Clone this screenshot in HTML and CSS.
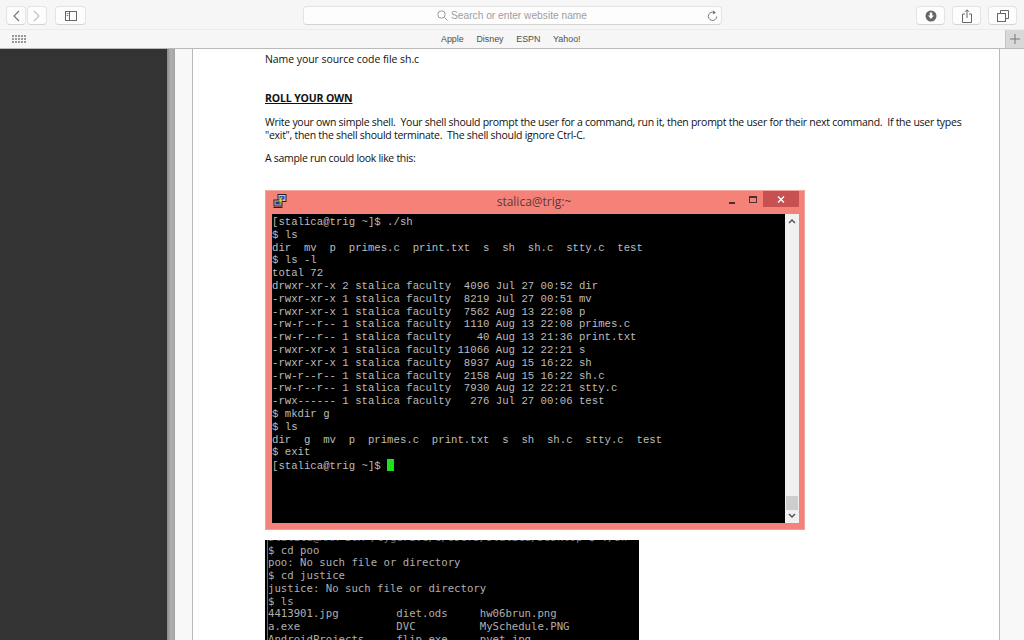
FILE: index.html
```html
<!DOCTYPE html>
<html lang="en">
<head>
<meta charset="utf-8">
<title>Safari</title>
<link rel="stylesheet" href="styles.css">
</head>
<body>
<header class="chrome">
  <div class="toolbar">
    <div class="nav">
      <button class="btn btn-nav"><svg width="8" height="12" viewBox="0 0 8 12"><path d="M7 1 2 6l5 5" fill="none" stroke="#6e6e6e" stroke-width="1.100"/></svg></button>
      <button class="btn btn-nav"><svg width="8" height="12" viewBox="0 0 8 12"><path d="M1 1l5 5-5 5" fill="none" stroke="#bdbdbd" stroke-width="1.100"/></svg></button>
      <button class="btn btn-side"><svg width="12" height="10" viewBox="0 0 12 10"><rect x=".5" y=".5" width="11" height="9" fill="none" stroke="#666"/><path d="M4.500 0v10" stroke="#666"/><path d="M1.500 2.500h2M1.500 4.500h2" stroke="#888"/></svg></button>
    </div>
    <div class="address">
      <span class="search"><svg class="lens" width="11" height="11" viewBox="0 0 11 11"><circle cx="4.500" cy="4.500" r="3.700" fill="none" stroke="#9a9a9a"/><path d="M7.300 7.300 10.500 10.500" stroke="#9a9a9a"/></svg>Search or enter website name</span>
      <svg class="reload" width="11" height="12" viewBox="0 0 11 12"><path d="M7.500 2.600A4.200 4.200 0 1 0 9.700 6.500" fill="none" stroke="#777"/><path d="M6 .5 9 2.600 6 4.500z" fill="#777"/></svg>
    </div>
    <div class="actions">
      <button class="btn btn-act"><svg width="12" height="12" viewBox="0 0 12 12"><circle cx="6" cy="6" r="5.500" fill="#666"/><path d="M4.800 2.500h2.400v3h1.700L6 9 3.100 5.500h1.700z" fill="#fff"/></svg></button>
      <button class="btn btn-act"><svg width="10" height="14" viewBox="0 0 10 14"><path d="M3 5H.5v8.500h9V5H7" fill="none" stroke="#666"/><path d="M5 9V1M3 2.800 5 .8l2 2" fill="none" stroke="#666"/></svg></button>
      <button class="btn btn-act"><svg width="12" height="12" viewBox="0 0 12 12"><rect x=".5" y="3.500" width="8" height="8" fill="none" stroke="#666"/><path d="M3.500 3.500v-3h8v8h-3" fill="none" stroke="#666"/></svg></button>
    </div>
  </div>
  <div class="favorites">
    <div class="grid-icon"><i></i><i></i><i></i><i></i><i></i><i></i><i></i><i></i><i></i><i></i><i></i><i></i><i></i><i></i><i></i></div>
    <nav class="links"><a>Apple</a><a>Disney</a><a>ESPN</a><a>Yahoo!</a></nav>
    <div class="plus"><svg width="10" height="10" viewBox="0 0 10 10"><path d="M5 0v10M0 5h10" stroke="#777"/></svg></div>
  </div>
</header>
<main class="viewport">
  <aside class="dark"></aside>
  <div class="gutter"></div>
  <div class="margin"></div>
  <article class="page">
    <p class="doc first">Name your source code file sh.c</p>
    <h2 class="doc heading">ROLL YOUR OWN</h2>
    <p class="doc para">Write your own simple shell.  Your shell should prompt the user for a command, run it, then prompt the user for their next command.  If the user types
"exit", then the shell should terminate.  The shell should ignore Ctrl-C.</p>
    <p class="doc sample">A sample run could look like this:</p>
    <section class="window">
      <div class="titlebar">
        <svg class="putty" width="14" height="14" viewBox="0 0 14 14"><rect x="5" y="0.500" width="8" height="7" fill="#c9c9d6" stroke="#222"/><rect x="6.500" y="2" width="5" height="3.500" fill="#2b50c8"/><rect x="1" y="6" width="8" height="6" fill="#b8b8c6" stroke="#222"/><rect x="2.500" y="7.500" width="5" height="3" fill="#2b3a8a"/><path d="M.5 13.500h9" stroke="#222"/><path d="M8 3 5.500 7l2 0L6 10.500 10 6H8l1.500-3z" fill="#f4e23a" stroke="#7a6a10" stroke-width=".4"/></svg>
        <span class="wintitle">stalica@trig:~</span>
        <span class="wbtn min"></span>
        <span class="wbtn max"></span>
        <span class="wbtn close"><svg width="8" height="7" viewBox="0 0 8 7"><path d="M1 .5l6 6M7 .5l-6 6" stroke="#fff" stroke-width="1.400"/></svg></span>
      </div>
      <div class="winbody">
<pre class="term">[stalica@trig ~]$ ./sh
$ ls
dir  mv  p  primes.c  print.txt  s  sh  sh.c  stty.c  test
$ ls -l
total 72
drwxr-xr-x 2 stalica faculty  4096 Jul 27 00:52 dir
-rwxr-xr-x 1 stalica faculty  8219 Jul 27 00:51 mv
-rwxr-xr-x 1 stalica faculty  7562 Aug 13 22:08 p
-rw-r--r-- 1 stalica faculty  1110 Aug 13 22:08 primes.c
-rw-r--r-- 1 stalica faculty    40 Aug 13 21:36 print.txt
-rwxr-xr-x 1 stalica faculty 11066 Aug 12 22:21 s
-rwxr-xr-x 1 stalica faculty  8937 Aug 15 16:22 sh
-rw-r--r-- 1 stalica faculty  2158 Aug 15 16:22 sh.c
-rw-r--r-- 1 stalica faculty  7930 Aug 12 22:21 stty.c
-rwx------ 1 stalica faculty   276 Jul 27 00:06 test
$ mkdir g
$ ls
dir  g  mv  p  primes.c  print.txt  s  sh  sh.c  stty.c  test
$ exit
[stalica@trig ~]$ <span class="cursor"></span></pre>
        <div class="scrollbar">
          <svg width="8" height="6" viewBox="0 0 8 6"><path d="M1 5l3-3 3 3" fill="none" stroke="#555" stroke-width="1.500"/></svg>
          <span class="thumb"></span>
          <svg width="8" height="6" viewBox="0 0 8 6"><path d="M1 1l3 3 3-3" fill="none" stroke="#555" stroke-width="1.500"/></svg>
        </div>
      </div>
    </section>
    <section class="shot">
<pre class="term2"><span class="clipped">stalica@MAX-BOX /cygdrive/c/Users/stalica/Desktop $ ./sh</span>
$ cd poo
poo: No such file or directory
$ cd justice
justice: No such file or directory
$ ls
4413901.jpg         diet.ods     hw06brun.png
a.exe               DVC          MySchedule.PNG
AndroidProjects     flip.exe     pvet.jpg</pre>
    </section>
  </article>
  <div class="right"></div>
</main>
</body>
</html>
```
FILE: styles.css
```css
* { box-sizing: border-box; }
html, body { margin: 0; height: 640px; overflow: hidden; }
body { font-family: "Liberation Sans", Arial, sans-serif; background: #f6f6f6; }
.chrome { height: 49px; background: #f6f6f6; border-bottom: 1px solid #b9b9b9; }
.toolbar { height: 30px; display: flex; align-items: flex-start; padding: 6px 7px 0 6px; border-bottom: 1px solid #ececec; }
.btn { display: flex; align-items: center; justify-content: center; height: 19px; padding: 0; background: #fdfdfd; border: 1px solid #e3e3e3; border-bottom-color: #d4d4d4; border-radius: 4px; }
.nav { display: flex; gap: 1px; width: 297px; flex: none; }
.btn-nav { width: 20px; }
.btn-side { width: 31px; margin-left: 7px; }
.address { position: relative; flex: none; width: 419px; height: 19px; display: flex; align-items: center; justify-content: center; background: #fdfdfd; border: 1px solid #e3e3e3; border-bottom-color: #d4d4d4; border-radius: 4px; }
.search { display: flex; align-items: center; gap: 3px; margin-right: 1px; font-size: 10.200px; color: #9d9d9d; }
.reload { position: absolute; right: 3px; top: 3px; }
.actions { display: flex; flex: none; gap: 7px; margin-left: 194px; }
.btn-act { width: 29px; }
.favorites { height: 18px; display: flex; align-items: center; position: relative; }
.grid-icon { display: grid; grid-template-columns: repeat(5, 2px); gap: 1px; margin: 0 0 0 12px; width: 13px; }
.grid-icon i { width: 2px; height: 2px; background: #9a9a9a; }
.links { position: absolute; left: 441px; top: 0; height: 18px; display: flex; align-items: center; gap: 12.700px; font-size: 8.900px; color: #4e4e4e; }
.plus { margin-left: auto; width: 19px; height: 18px; display: flex; align-items: center; justify-content: center; background: #d8d8d8; border-left: 1px solid #c4c4c4; }

.viewport { height: 591px; display: flex; overflow: hidden; }
.dark { width: 167px; background: #333; }
.gutter { width: 8px; background: linear-gradient(90deg, #8b8b8b, #b0b0b0 50%, #a2a2a2); }
.margin { width: 18px; background: #f8f8f8; border-right: 1px solid #b9b9b9; }
.page { width: 807px; background: #fff; border-right: 1px solid #b9b9b9; padding-left: 72px; overflow: hidden; }
.right { flex: 1; background: #f8f8f8; }

.doc { margin: 0; font-family: "Open Sans", "Noto Sans", sans-serif; font-size: 10.500px; line-height: 13px; color: #111; white-space: pre-wrap; }
.first { margin-top: 4px; letter-spacing: -.06px; }
.heading { margin-top: 26px; font-weight: 700; letter-spacing: -.15px; text-decoration: underline; }
.para { margin-top: 11px; width: 730px; letter-spacing: -.27px; }
.sample { margin-top: 10px; letter-spacing: -.3px; }

.window { width: 540px; height: 340px; margin-top: 25px; background: #f58279; border: 1px solid #e8a49e; border-top-color: #f3a9a3; padding: 0 5px 6px 6px; display: flex; flex-direction: column; }
.titlebar { height: 23px; flex: none; display: flex; align-items: flex-start; position: relative; }
.putty { margin: 3px 0 0 1px; }
.wintitle { position: absolute; left: 0; right: 0; top: 3px; text-align: center; font-family: "Open Sans", sans-serif; font-size: 12px; line-height: 16px; color: #5c3a38; padding-right: 3px; }
.wbtn { position: absolute; display: block; }
.min { left: 457px; top: 11px; width: 6px; height: 2px; background: #4a3030; }
.max { left: 477px; top: 5px; width: 8px; height: 7px; border: 1px solid #4a3030; border-top-width: 2px; }
.close { right: 0; top: 0; width: 36px; height: 16px; background: #c75050; display: flex; align-items: center; justify-content: center; }
.winbody { flex: 1; display: flex; min-height: 0; }
.term { flex: 1; margin: 0; padding: 2px 0 0; background: #000; color: #bcbcbc; font-family: "Liberation Mono", monospace; font-size: 10.670px; line-height: 12.800px; overflow: hidden; }
.cursor { display: inline-block; width: 7px; height: 12px; background: #1fe01f; vertical-align: -2px; }
.scrollbar { width: 14px; background: #f0f0f0; display: flex; flex-direction: column; align-items: center; padding: 4px 0; }
.thumb { width: 12px; height: 14px; background: #cdcdcd; margin-top: auto; margin-bottom: 3px; }

.shot { width: 374px; height: 110px; margin-top: 10px; background: #000; border-left: 2px solid #000; overflow: hidden; position: relative; }
.shot::before { content: ""; position: absolute; left: 0; top: 0; bottom: 0; width: 1px; background: #3f78a8; }
.term2 { margin: -8px 0 0 1px; color: #aeaeae; font-family: "DejaVu Sans Mono", monospace; font-size: 10.670px; line-height: 12.700px; }
.clipped { color: #777; }
```
